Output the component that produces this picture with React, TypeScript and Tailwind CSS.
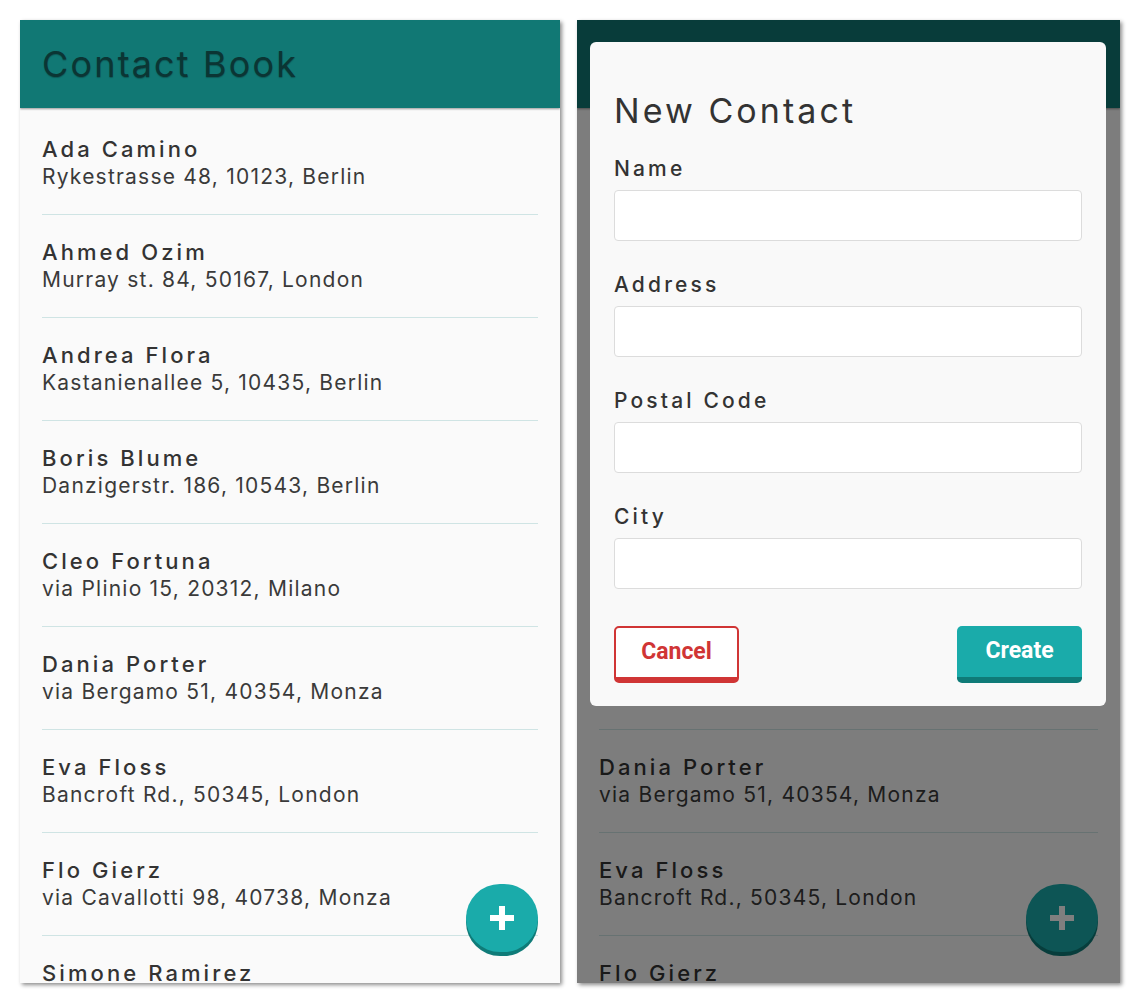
import React from 'react';

interface Contact {
  name: string;
  address: string;
}

const contacts: Contact[] = [
  { name: 'Ada Camino', address: 'Rykestrasse 48, 10123, Berlin' },
  { name: 'Ahmed Ozim', address: 'Murray st. 84, 50167, London' },
  { name: 'Andrea Flora', address: 'Kastanienallee 5, 10435, Berlin' },
  { name: 'Boris Blume', address: 'Danzigerstr. 186, 10543, Berlin' },
  { name: 'Cleo Fortuna', address: 'via Plinio 15, 20312, Milano' },
  { name: 'Dania Porter', address: 'via Bergamo 51, 40354, Monza' },
  { name: 'Eva Floss', address: 'Bancroft Rd., 50345, London' },
  { name: 'Flo Gierz', address: 'via Cavallotti 98, 40738, Monza' },
  { name: 'Simone Ramirez', address: 'Schönhauser Allee 12, 10119, Berlin' },
];

const font = { fontFamily: 'Inter, "Open Sans", sans-serif' };

const ContactRow = ({ name, address }: Contact) => (
  <li className="border-b border-[#cfe4e4] py-[24px]">
    <div className="text-[22px] leading-[27px] font-medium tracking-[0.14em] text-[#333]">{name}</div>
    <div className="text-[21px] leading-[27px] tracking-[0.058em] text-[#3a3a3a]">{address}</div>
  </li>
);

const Fab = () => (
  <button className="absolute right-[22px] bottom-[31px] w-[72px] h-[68px] rounded-full bg-[#1aabaa] shadow-[0_4px_0_#0f7b78] flex items-center justify-center">
    <svg width="24" height="24" viewBox="0 0 24 24">
      <path d="M9 0h6v9h9v6h-9v9H9v-9H0V9h9z" fill="#fff" />
    </svg>
  </button>
);

const Phone = ({ children, offset = false, width }: { children?: React.ReactNode; offset?: boolean; width: string }) => (
  <div className={`relative h-[963px] ${width} bg-[#fafafa] overflow-hidden shadow-[2px_2px_4px_rgba(0,0,0,0.45)]`} style={font}>
    <header className="h-[88px] bg-[#117874] flex items-center px-[22px] shadow-[0_1px_2px_rgba(0,0,0,0.4)] relative z-10">
      <h1 className="text-[36px] text-[#0b3534] tracking-[0.06em] [text-shadow:0_1px_1px_rgba(0,0,0,0.25)]">Contact Book</h1>
    </header>
    <ul className="px-[22px] pt-[4px]">
      {offset && <li className="h-[103px] border-b border-[#cfe4e4]" />}
      {contacts.map((c) => (
        <ContactRow key={c.name} {...c} />
      ))}
    </ul>
    <Fab />
    {children}
  </div>
);

const Field = ({ label }: { label: string }) => (
  <label className="block mb-[30px] last:mb-0">
    <span className="block text-[21px] leading-[28px] font-medium tracking-[0.15em] text-[#333] mb-[7px]">{label}</span>
    <input className="block w-full h-[51px] bg-white border border-[#dcdcdc] rounded-[4px]" />
  </label>
);

export default function App() {
  return (
    <div className="w-[1140px] h-[1004px] bg-white flex gap-[17px] pl-[20px] pt-[20px]">
      <Phone width="w-[540px]" />
      <Phone width="w-[543px]" offset>
        <div className="absolute inset-0 z-20 bg-black/50" />
        <div className="absolute z-30 left-[13px] right-[14px] top-[22px] rounded-[6px] bg-[#f9f9f9] px-[24px] pt-[51px] pb-[23px]">
          <h2 className="text-[34px] leading-[36px] text-[#333] tracking-[0.09em] mb-[26px]">New Contact</h2>
          <div className="flex flex-col">
            <Field label="Name" />
            <Field label="Address" />
            <Field label="Postal Code" />
            <Field label="City" />
          </div>
          <div className="flex justify-between mt-[37px]" style={{ fontFamily: 'Roboto, sans-serif' }}>
            <button className="w-[125px] h-[57px] rounded-[5px] border-2 border-b-[6px] border-[#d03535] bg-white text-[#d03535] text-[23px] font-bold">
              Cancel
            </button>
            <button className="w-[125px] h-[57px] rounded-[5px] border-b-[6px] border-[#0f7b78] bg-[#1aabaa] text-white text-[23px] font-bold">
              Create
            </button>
          </div>
        </div>
      </Phone>
    </div>
  );
}
